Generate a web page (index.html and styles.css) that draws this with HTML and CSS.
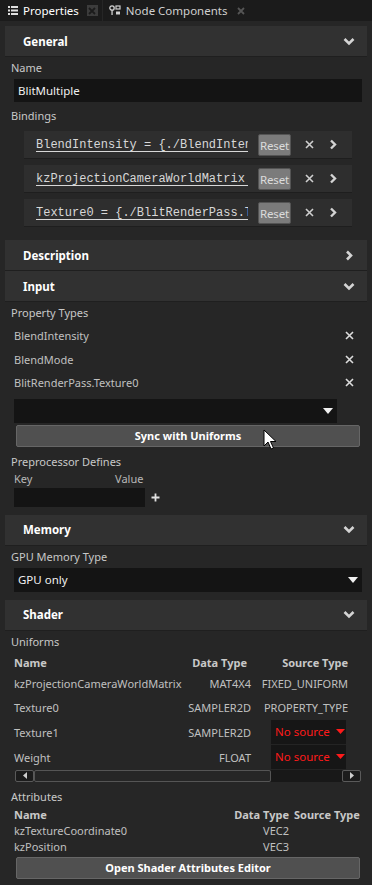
FILE: index.html
```html
<!DOCTYPE html>
<html lang="en">
  <head>
    <meta charset="UTF-8" />
    <title>Properties</title>
    <link rel="stylesheet" href="styles.css">
  </head>
  <body>
    <div class="tabs">
      <div class="tab active">
        <svg class="tab-icon" width="10" height="9" viewBox="0 0 10 9">
          <rect x="0" y="0" width="2" height="2" fill="#e0e0e0"/>
          <rect x="3" y="0" width="7" height="2" fill="#e0e0e0"/>
          <rect x="0" y="3.5" width="2" height="2" fill="#e0e0e0"/>
          <rect x="3" y="3.5" width="7" height="2" fill="#e0e0e0"/>
          <rect x="0" y="7" width="2" height="2" fill="#e0e0e0"/>
          <rect x="3" y="7" width="7" height="2" fill="#e0e0e0"/>
        </svg>
        <span>Properties</span>
        <span class="tab-close boxed">
          <svg width="8" height="8" viewBox="0 0 8 8"><path d="M1 1L7 7M7 1L1 7" stroke="#1b1b1b" stroke-width="1.8"/></svg>
        </span>
      </div>
      <div class="tab">
        <svg class="tab-icon" width="12" height="11" viewBox="0 0 12 11">
          <circle cx="3" cy="3" r="2.2" fill="none" stroke="#d0d0d0" stroke-width="1.3"/>
          <rect x="2.4" y="5" width="1.3" height="5" fill="#d0d0d0"/>
          <rect x="7" y="1" width="4" height="3" fill="none" stroke="#d0d0d0" stroke-width="1.2"/>
          <rect x="7" y="6.5" width="4" height="3" fill="#d0d0d0"/>
        </svg>
        <span>Node Components</span>
        <span class="tab-close">
          <svg width="8" height="8" viewBox="0 0 8 8"><path d="M1 1L7 7M7 1L1 7" stroke="#555" stroke-width="1.8"/></svg>
        </span>
      </div>
    </div>

    <div class="panel">
      <!-- General -->
      <div class="section-header">
        <span>General</span>
        <svg class="chevron" width="12" height="9" viewBox="0 0 12 9"><path d="M1.5 2L6 6.5L10.5 2" fill="none" stroke="#d4d4d4" stroke-width="2.6"/></svg>
      </div>
      <div class="section-body">
        <div class="label">Name</div>
        <div class="text-input">BlitMultiple</div>
        <div class="label bindings-label">Bindings</div>
        <div class="bindings">
          <div class="binding">
            <span class="binding-text">BlendIntensity = {./BlendIntensity}</span>
            <span class="reset">Reset</span>
            <svg class="icon-x" width="9" height="9" viewBox="0 0 9 9"><path d="M1 1L8 8M8 1L1 8" stroke="#cfcfcf" stroke-width="1.6"/></svg>
            <svg class="icon-right" width="8" height="11" viewBox="0 0 8 11"><path d="M2 1.5L6 5.5L2 9.5" fill="none" stroke="#d4d4d4" stroke-width="2.4"/></svg>
          </div>
          <div class="binding">
            <span class="binding-text">kzProjectionCameraWorldMatrix = {./kz}</span>
            <span class="reset">Reset</span>
            <svg class="icon-x" width="9" height="9" viewBox="0 0 9 9"><path d="M1 1L8 8M8 1L1 8" stroke="#cfcfcf" stroke-width="1.6"/></svg>
            <svg class="icon-right" width="8" height="11" viewBox="0 0 8 11"><path d="M2 1.5L6 5.5L2 9.5" fill="none" stroke="#d4d4d4" stroke-width="2.4"/></svg>
          </div>
          <div class="binding">
            <span class="binding-text">Texture0 = {./BlitRenderPass.Texture0}</span>
            <span class="reset">Reset</span>
            <svg class="icon-x" width="9" height="9" viewBox="0 0 9 9"><path d="M1 1L8 8M8 1L1 8" stroke="#cfcfcf" stroke-width="1.6"/></svg>
            <svg class="icon-right" width="8" height="11" viewBox="0 0 8 11"><path d="M2 1.5L6 5.5L2 9.5" fill="none" stroke="#d4d4d4" stroke-width="2.4"/></svg>
          </div>
        </div>
      </div>

      <!-- Description -->
      <div class="section-header">
        <span>Description</span>
        <svg class="chevron" width="12" height="11" viewBox="0 0 12 11"><path d="M4 1.5L8 5.5L4 9.5" fill="none" stroke="#d4d4d4" stroke-width="2.6"/></svg>
      </div>

      <!-- Input -->
      <div class="section-header">
        <span>Input</span>
        <svg class="chevron" width="12" height="9" viewBox="0 0 12 9"><path d="M1.5 2L6 6.5L10.5 2" fill="none" stroke="#d4d4d4" stroke-width="2.6"/></svg>
      </div>
      <div class="section-body input-body">
        <div class="label">Property Types</div>
        <div class="type-list">
          <div class="type-row">
            <span>BlendIntensity</span>
            <svg width="9" height="9" viewBox="0 0 9 9"><path d="M1 1L8 8M8 1L1 8" stroke="#dcdcdc" stroke-width="1.6"/></svg>
          </div>
          <div class="type-row">
            <span>BlendMode</span>
            <svg width="9" height="9" viewBox="0 0 9 9"><path d="M1 1L8 8M8 1L1 8" stroke="#dcdcdc" stroke-width="1.6"/></svg>
          </div>
          <div class="type-row">
            <span>BlitRenderPass.Texture0</span>
            <svg width="9" height="9" viewBox="0 0 9 9"><path d="M1 1L8 8M8 1L1 8" stroke="#dcdcdc" stroke-width="1.6"/></svg>
          </div>
        </div>
        <div class="dropdown short">
          <span></span>
          <svg width="10" height="6" viewBox="0 0 10 6"><path d="M0 0H10L5 6Z" fill="#f0f0f0"/></svg>
        </div>
        <div class="button">Sync with Uniforms</div>
        <div class="label pre-label">Preprocessor Defines</div>
        <div class="kv-head">
          <span class="kv-key">Key</span>
          <span>Value</span>
        </div>
        <div class="kv-row">
          <div class="kv-input"></div>
          <svg width="9" height="9" viewBox="0 0 9 9"><path d="M4.5 0.5V8.5M0.5 4.5H8.5" stroke="#e0e0e0" stroke-width="1.8"/></svg>
        </div>
      </div>

      <!-- Memory -->
      <div class="section-header">
        <span>Memory</span>
        <svg class="chevron" width="12" height="9" viewBox="0 0 12 9"><path d="M1.5 2L6 6.5L10.5 2" fill="none" stroke="#d4d4d4" stroke-width="2.6"/></svg>
      </div>
      <div class="section-body memory-body">
        <div class="label">GPU Memory Type</div>
        <div class="dropdown">
          <span>GPU only</span>
          <svg width="10" height="6" viewBox="0 0 10 6"><path d="M0 0H10L5 6Z" fill="#f0f0f0"/></svg>
        </div>
      </div>

      <!-- Shader -->
      <div class="section-header">
        <span>Shader</span>
        <svg class="chevron" width="12" height="9" viewBox="0 0 12 9"><path d="M1.5 2L6 6.5L10.5 2" fill="none" stroke="#d4d4d4" stroke-width="2.6"/></svg>
      </div>
      <div class="section-body shader-body">
        <div class="label">Uniforms</div>
        <div class="uniforms">
          <div class="u-row head">
            <span>Name</span>
            <span class="r dt-head">Data Type</span>
            <span class="r">Source Type</span>
          </div>
          <div class="u-row">
            <span>kzProjectionCameraWorldMatrix</span>
            <span class="r">MAT4X4</span>
            <span class="r">FIXED_UNIFORM</span>
          </div>
          <div class="u-row">
            <span>Texture0</span>
            <span class="r">SAMPLER2D</span>
            <span class="r">PROPERTY_TYPE</span>
          </div>
          <div class="u-row tall">
            <span>Texture1</span>
            <span class="r">SAMPLER2D</span>
            <span class="source-select">No source
              <svg width="9" height="5" viewBox="0 0 9 5"><path d="M0 0H9L4.5 5Z" fill="#ff1a1a"/></svg>
            </span>
          </div>
          <div class="u-row tall">
            <span>Weight</span>
            <span class="r">FLOAT</span>
            <span class="source-select">No source
              <svg width="9" height="5" viewBox="0 0 9 5"><path d="M0 0H9L4.5 5Z" fill="#ff1a1a"/></svg>
            </span>
          </div>
        </div>
        <div class="hscroll">
          <div class="sb-btn">
            <svg width="6" height="7" viewBox="0 0 6 7"><path d="M5 0V7L1 3.5Z" fill="#cfcfcf"/></svg>
          </div>
          <div class="sb-thumb"></div>
          <div class="sb-track"></div>
          <div class="sb-btn">
            <svg width="6" height="7" viewBox="0 0 6 7"><path d="M1 0V7L5 3.5Z" fill="#cfcfcf"/></svg>
          </div>
        </div>
        <div class="label attr-label">Attributes</div>
        <div class="attributes">
          <div class="a-row head">
            <span>Name</span>
            <span class="r">Data Type</span>
            <span>Source Type</span>
          </div>
          <div class="a-row">
            <span>kzTextureCoordinate0</span>
            <span class="r">VEC2</span>
            <span></span>
          </div>
          <div class="a-row">
            <span>kzPosition</span>
            <span class="r">VEC3</span>
            <span></span>
          </div>
        </div>
        <div class="button">Open Shader Attributes Editor</div>
      </div>
    </div>

    <svg class="cursor" width="14" height="22" viewBox="0 0 14 22">
      <path d="M1 1V17L5 13L8 20L10.5 19L7.5 12.5H13Z" fill="#fff" stroke="#000" stroke-width="1"/>
    </svg>
  </body>
</html>
```

FILE: styles.css
```css
body {
  margin: 0;
  background-color: #262626;
  color: #c8c8c8;
  font-family: "Noto Sans", sans-serif;
  font-size: 11px;
  width: 372px;
  min-height: 885px;
  overflow: hidden;
}
.tabs {
  display: flex;
  height: 21px;
  background-color: #1b1b1b;
}
.tab {
  display: flex;
  align-items: center;
  padding: 0 6px 0 6px;
  color: #d0d0d0;
  font-size: 11.5px;
}
.tab.active {
  padding: 0 4px 0 8px;
  color: #fff;
  border-right: 1px solid #262626;
}
.tab-icon {
  margin-right: 5px;
}
.tab-close {
  display: flex;
  align-items: center;
  justify-content: center;
  width: 11px;
  height: 11px;
  margin-left: 8px;
}
.tab-close.boxed {
  background-color: #3c3c3c;
  margin-left: 8px;
}
.panel {
  padding: 5px 5px 0 5px;
}
.section-header {
  display: flex;
  align-items: center;
  justify-content: space-between;
  height: 30px;
  padding: 0 12px 0 18px;
  background-color: #313131;
  border-bottom: 1px solid #1f1f1f;
  color: #fff;
  font-weight: bold;
  font-size: 11.5px;
}
.section-body {
  padding: 3px 5px 13px 6px;
}
.label {
  line-height: 16px;
  margin-bottom: 3px;
}
.text-input {
  margin-left: 3px;
  height: 23px;
  line-height: 23px;
  padding-left: 4px;
  background-color: #141414;
  color: #f0f0f0;
  font-size: 11.5px;
}
.bindings-label {
  margin-top: 6px;
  margin-bottom: 7px;
}
.bindings {
  display: flex;
  flex-direction: column;
  gap: 6px;
  margin: 0 10px 0 13px;
}
.binding {
  display: flex;
  align-items: center;
  height: 27px;
  padding-left: 12px;
  background-color: #2e2e2e;
  border-bottom: 1px solid #1e1e1e;
}
.binding-text {
  width: 212px;
  flex-shrink: 0;
  overflow: hidden;
  white-space: nowrap;
  font-family: "Liberation Mono", monospace;
  font-size: 12px;
  color: #d8d8d8;
  text-decoration: underline;
  text-underline-offset: 3px;
}
.reset {
  flex-shrink: 0;
  width: 31px;
  height: 20px;
  margin-left: 10px;
  line-height: 21px;
  text-align: center;
  background-color: #7b7b7b;
  border: 1px solid #545454;
  border-radius: 2px;
  color: #dcdcdc;
  font-size: 11.5px;
  letter-spacing: -0.2px;
}
.icon-x {
  margin-left: 14px;
}
.icon-right {
  margin-left: 15px;
}
.input-body {
  padding-bottom: 8px;
}
.type-list {
  margin: 1px 0 4px 3px;
}
.type-row {
  display: flex;
  align-items: center;
  justify-content: space-between;
  height: 23.5px;
  padding-right: 8px;
  color: #c0c0c0;
}
.dropdown {
  display: flex;
  align-items: center;
  justify-content: space-between;
  height: 24px;
  margin-left: 3px;
  padding: 0 4px 0 4px;
  background-color: #141414;
  color: #f0f0f0;
  font-size: 11.5px;
}
.dropdown.short {
  margin-right: 25px;
}
.button {
  height: 20px;
  line-height: 20px;
  margin: 2px 2px 0 5px;
  text-align: center;
  background-color: #505050;
  border: 1px solid #666;
  border-radius: 2px;
  color: #fff;
  font-weight: bold;
}
.pre-label {
  margin-top: 7px;
  margin-bottom: 0;
}
.kv-head {
  display: flex;
  line-height: 18px;
  margin-left: 3px;
  color: #b8b8b8;
}
.kv-key {
  width: 101px;
}
.kv-row {
  display: flex;
  align-items: center;
  gap: 6px;
  margin-left: 3px;
}
.kv-input {
  width: 131px;
  height: 19px;
  background-color: #141414;
}
.memory-body {
  padding-top: 3px;
  padding-bottom: 8px;
}
.shader-body {
  padding-top: 3px;
  padding-bottom: 8px;
}
.uniforms {
  margin-left: 3px;
  margin-right: 14px;
}
.u-row {
  display: grid;
  grid-template-columns: minmax(0, 1fr) 81px 93px;
  column-gap: 4px;
  align-items: center;
  height: 24px;
  white-space: nowrap;
  color: #c0c0c0;
}
.u-row.head {
  height: 19px;
  color: #c8c8c8;
  font-weight: bold;
}
.u-row.tall {
  height: 25px;
}
.r {
  text-align: right;
}
.dt-head {
  padding-right: 4px;
}
.source-select {
  display: flex;
  align-items: center;
  justify-content: space-between;
  justify-self: end;
  align-self: stretch;
  width: 70px;
  margin-right: 2px;
  padding: 0 1px 0 4px;
  background-color: #161616;
  border-bottom: 1px solid #242424;
  color: #ff1a1a;
  font-size: 11.5px;
}
.hscroll {
  display: flex;
  height: 12px;
  margin: 0 1px 0 4px;
}
.sb-btn {
  display: flex;
  align-items: center;
  justify-content: center;
  width: 17px;
  border: 1px solid #5a5a5a;
  border-radius: 2px;
  background-color: #1c1c1c;
}
.sb-thumb {
  width: 235px;
  border: 1px solid #555;
  border-radius: 2px;
  background-color: #262626;
}
.sb-track {
  flex: 1;
  background-color: #181818;
}
.attr-label {
  margin-top: 7px;
  margin-bottom: 2px;
}
.attributes {
  margin-left: 3px;
}
.a-row {
  display: grid;
  grid-template-columns: minmax(0, 1fr) 68px 68px;
  column-gap: 5px;
  height: 16px;
  line-height: 16px;
  white-space: nowrap;
  color: #c0c0c0;
}
.a-row.head {
  font-weight: bold;
  color: #c8c8c8;
}
.cursor {
  position: absolute;
  left: 263px;
  top: 429px;
}
```
